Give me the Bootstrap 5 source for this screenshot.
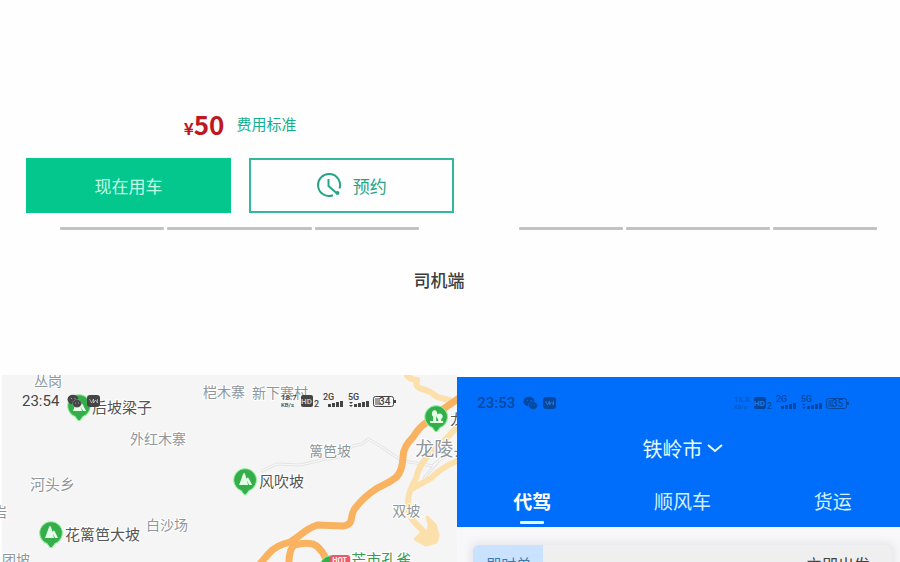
<!DOCTYPE html>
<html lang="zh-CN">
<head>
<meta charset="utf-8">
<meta name="viewport" content="width=device-width, initial-scale=1">
<title>司机端</title>
<link href="https://cdn.jsdelivr.net/npm/bootstrap@5.3.0/dist/css/bootstrap.min.css" rel="stylesheet">
<style>
  body { font-family: "Noto Sans CJK SC", sans-serif; background: #fefefe; color: #444; }
  .half-left { flex: 0 0 50.8%; }
  .half-right { flex: 1 1 0; min-width: 0; }
  .order-box { padding: 108px 3px 0 26px; }
  .price { color: #c01822; font-size: 26px; line-height: 32px; }
  .price small { font-size: 17px; line-height: 1; }
  .fee-link { color: #14b08e; font-size: 15px; line-height: 32px; }
  .order-btns { gap: 18px; margin-top: 18px; }
  .order-btns .btn { font-size: 17px; height: 55px; border: 2px solid #07c68e; }
  .btn-now, .btn-now:hover { background: #04c78d; color: #c2fbe6; }
  .order-btns .btn-book, .btn-book:hover { border-color: #35b898; color: #26a488; background: #fefefe; }
  .bars { gap: 3px; }
  .bars-left { padding: 14px 38px 0 60px; }
  .bars-right { padding: 0 23px 0 62px; }
  .bars span { height: 3px; background: #c2c2c2; flex: 105 1 0; border-radius: 1px; }
  .bars span.wide { flex-grow: 145; }
  .section-title { font-size: 17px; line-height: 24px; margin: 38px 22px 83px 0; font-weight: 500; color: #3c3c3c; }
  .map-pane svg.map { inset: 0; }
  .status { height: 20px; font: 500 15px/20px Roboto, sans-serif; }
  .map-pane .status { margin: 16px 0 0 22px; color: #454545; font-weight: 400; }
  .driver .status { margin-left: 20px; color: #06489f; }
  .status .apps { margin-left: 8px; }
  .status .signal { margin-left: 179px; }
  .driver .status .signal { margin-left: 176px; }
  .pin { fill: #35ad4b; stroke: #8ff09a; stroke-width: 1; }
  .place { font-size: 14px; fill: #8f9699; stroke: #fff; stroke-width: 2px; paint-order: stroke; }
  .spot { font-size: 15px; fill: #555; stroke: #fff; stroke-width: 2px; paint-order: stroke; }
  .driver { width: calc(100% + 8px); margin-top: 2px; background: #f8f8fa; }
  .driver-head { background: #006efa; padding-top: 16px; }
  .city { color: #e6fbff; font-size: 20px; line-height: 28px; margin-top: 22px; }
  .city:hover { color: #fff; }
  .kinds { margin-top: 24px; }
  .kinds .nav-link { color: #d5f1ff; font-size: 19px; line-height: 28px; padding: 0 0 12px; width: 100%; }
  .kinds .nav-link.active { color: #fff; font-weight: 700; padding: 0; }
  .kinds .nav-link.active::after { content: ""; display: block; width: 24px; height: 3px; margin: 6px auto 3px; background: #d9ffff; border-radius: 1px; }
  .order-card { margin: 18px 16px 0; background: #efefef; border-radius: 6px; box-shadow: 0 0 8px 3px #e6e6ea; height: 56px; }
  .tag { background: #c9e2ff; color: #3d7cad; font-size: 15px; line-height: 38px; padding: 0 13px; width: 70px; border-radius: 6px 0 0 0; }
  .depart { font-size: 16px; line-height: 38px; padding-right: 22px; color: #444; }
</style>
</head>
<body>
<div class="vh-100 d-flex flex-column overflow-hidden">
  <section class="d-flex align-items-end">
    <div class="half-left">
      <div class="order-box">
        <div class="d-flex justify-content-center align-items-center">
          <span class="price fw-bold me-2 pe-1"><small class="fw-bold">¥</small>50</span>
          <a href="#" class="fee-link text-decoration-none">费用标准</a>
        </div>
        <div class="order-btns d-flex">
          <button type="button" class="btn btn-now rounded-0 w-50">现在用车</button>
          <button type="button" class="btn btn-book rounded-0 w-50 d-flex justify-content-center align-items-center">
            <svg class="me-2" width="28" height="28" viewBox="0 0 28 28" fill="none" stroke="#26a488" stroke-width="2" aria-hidden="true">
              <path d="M16 23.300A11 11 0 1 1 22.500 16.500M11.500 7v7l8 7"/>
              <circle cx="20.500" cy="21" r="1" fill="#26a488"/>
            </svg>
            <span>预约</span>
          </button>
        </div>
      </div>
      <div class="bars bars-left d-flex"><span></span><span class="wide"></span><span></span></div>
    </div>
    <div class="half-right">
      <div class="bars bars-right d-flex"><span></span><span class="wide"></span><span></span></div>
    </div>
  </section>

  <h1 class="section-title text-center">司机端</h1>

  <section class="d-flex flex-grow-1 overflow-hidden">
    <div class="half-left map-pane position-relative overflow-hidden">
      <svg class="map position-absolute w-100 h-100" viewBox="0 375 457 187" preserveAspectRatio="xMinYMin slice" role="img" aria-label="地图">
        <defs>
          <path id="pin" class="pin" d="M-4 10.500A11.300 11.300 0 1 1 4 10.500L1 14.500H-1Z"/>
          <path id="hills" d="M-6 5L-2-6Q-1-8 0-6L3 5ZM1-1Q3-4 4-1L7 5H4Z" fill="#e3ffe5"/>
        </defs>
        <rect x="2" y="375" width="455" height="187" fill="#f5f5f5"/>
        <g fill="none" stroke-linejoin="round" stroke-linecap="round">
          <path stroke="#e2e3e4" stroke-width="3" d="M262 471L276 464L300 465L322 460L340 457L352 446L362 444L368 439L380 446L393 455L403 461L422 464L432 466L443 457M424 478L440 459"/>
          <path stroke="#fafafa" d="M262 471L276 464L300 465L322 460L340 457L352 446L362 444L368 439L380 446L393 455L403 461L422 464L432 466L443 457M424 478L440 459"/>
          <g stroke="#fbe0ac" stroke-width="6">
            <path d="M407 376Q411 380 417 380Q414 387 422 389Q430 391 437 397L449 400"/>
            <path d="M459 425Q445 440 432 452Q419 463 416 478Q407 494 408 503Q406 514 416 524L425 533M459 460Q440 468 431 478L413 488"/>
            <path d="M427 517L435 525L438 535L436 542L426 545L415 539L420 534L427 532L429 525Z" fill="#fbe0ac" stroke-width="3"/>
          </g>
          <g stroke="#f9b25f" stroke-width="7">
            <path d="M459 398L440 411Q434 418 427 422Q419 427 413 437Q403 447 403 456Q402 473 395 478Q390 482 385 484L377 488Q362 498 356 507Q352 511 351 520Q350 525 343 526L317 525Q308 528 300 535L290 542Q276 545 269 553L258 566"/>
            <path d="M289 567Q288 551 294 545Q304 542 313 544Q320 547 325 557L330 567"/>
          </g>
        </g>
        <g class="place">
          <text x="34" y="386">丛岗</text>
          <text x="203" y="397">桤木寨</text>
          <text x="252" y="398">新下寨村</text>
          <text x="130" y="444">外红木寨</text>
          <text x="309" y="456">篱笆坡</text>
          <text x="30" y="490" style="font-size:15px">河头乡</text>
          <text x="146" y="530">白沙场</text>
          <text x="392" y="516">双坡</text>
          <text x="-7" y="517">岩</text>
          <text x="2" y="565">团坡</text>
        </g>
        <text class="place" x="415" y="456" style="font-size:19px">龙陵县</text>
        <use href="#pin" x="79" y="406"/><use href="#hills" x="79" y="406"/>
        <use href="#pin" x="51" y="533"/><use href="#hills" x="51" y="533"/>
        <use href="#pin" x="245" y="480"/><use href="#hills" x="245" y="480"/>
        <use href="#pin" x="436" y="417"/>
        <path d="M434 410a3.500 4 0 0 1 2 7v4h2v-2a3 3 0 1 1 3 0v2h2v2h-13v-2h3v-4a3.500 4 0 0 1 1-7Z" fill="#e3ffe5"/>
        <use href="#pin" x="331" y="567"/>
        <rect x="330" y="555" width="20" height="10" rx="3" fill="#ee5968"/>
        <text x="332" y="563" font-size="7" font-weight="700" fill="#fff">HOT</text>
        <g class="spot">
          <text x="92" y="413">后坡梁子</text>
          <text x="259" y="487">风吹坡</text>
          <text x="65" y="540">花篱笆大坡</text>
          <text x="450" y="425">龙山</text>
          <text x="351" y="565" style="fill:#3d9a50">芒市孔雀</text>
        </g>
      </svg>
      <div class="status position-relative d-flex align-items-center">
        <span>23:54</span>
        <svg class="apps flex-shrink-0" width="34" height="16" viewBox="0 0 34 16" aria-hidden="true">
          <ellipse cx="6" cy="6.500" rx="5.500" ry="4.800" fill="currentColor"/>
          <ellipse cx="10" cy="10.500" rx="4.500" ry="4" fill="currentColor" stroke="#fff" stroke-opacity=".35" stroke-width=".6"/>
          <path d="M4 5.500h1M7.500 5.500h1M8 10h1M11 10h1" stroke="#fff" stroke-opacity=".5"/>
          <rect x="20" y="2" width="13" height="12" rx="3" fill="currentColor"/>
          <path d="M22.500 6l2 4l2-4v4l2-3l2 3V6" fill="none" stroke="#fff" stroke-opacity=".5"/>
        </svg>
        <svg class="signal flex-shrink-0" width="118" height="18" viewBox="0 0 118 18" aria-hidden="true">
          <g fill="currentColor" font-family="Roboto, sans-serif" font-weight="500">
            <text x="1" y="8" font-size="8">18.7</text>
            <text x="1" y="15" font-size="6">KB/s</text>
            <rect x="21" y="3" width="12" height="12" rx="2"/>
            <text x="21" y="12" font-size="8" font-weight="700" fill="#fff" fill-opacity=".7">HD</text>
            <text x="34" y="15" font-size="9">2</text>
            <text x="43" y="8" font-size="9">2G</text>
            <path d="M48 12h3v3h-3zM52 11h3v4h-3zM56 10h3v5h-3zM60 9h3v6h-3z"/>
            <text x="68" y="8" font-size="9">5G</text>
            <path d="M69 10h4l-2 2zM69 13h4l-2 2zM74 12h3v3h-3zM78 11h3v4h-3zM82 10h3v5h-3zM86 9h3v6h-3z"/>
            <rect x="93.500" y="4.500" width="20" height="10" rx="2" fill="none" stroke="currentColor"/>
            <path d="M95 6h5v7h-5z" fill-opacity=".5"/><path d="M114 8h2v3h-2z"/>
            <text x="99" y="13" font-size="10">34</text>
          </g>
        </svg>
      </div>
    </div>

    <div class="half-right">
      <div class="driver h-100">
        <header class="driver-head">
          <div class="status d-flex align-items-center">
            <span>23:53</span>
            <svg class="apps flex-shrink-0" width="34" height="16" viewBox="0 0 34 16" aria-hidden="true">
              <ellipse cx="6" cy="6.500" rx="5.500" ry="4.800" fill="currentColor"/>
              <ellipse cx="10" cy="10.500" rx="4.500" ry="4" fill="currentColor" stroke="#006efa" stroke-width=".6"/>
              <path d="M4 5.500h1M7.500 5.500h1M8 10h1M11 10h1" stroke="#006efa"/>
              <rect x="20" y="2" width="13" height="12" rx="3" fill="currentColor"/>
              <path d="M22.500 6l2 4l2-4v4l2-3l2 3V6" fill="none" stroke="#2a74c8"/>
            </svg>
            <svg class="signal flex-shrink-0" width="118" height="18" viewBox="0 0 118 18" aria-hidden="true">
              <g fill="currentColor" font-family="Roboto, sans-serif" font-weight="500">
                <text x="1" y="8" font-size="8" fill-opacity=".6">18.8</text>
                <text x="1" y="15" font-size="6" fill-opacity=".6">KB/s</text>
                <rect x="21" y="3" width="12" height="12" rx="2"/>
                <text x="21" y="12" font-size="8" font-weight="700" fill="#1b7bea">HD</text>
                <text x="34" y="15" font-size="9">2</text>
                <text x="43" y="8" font-size="9">2G</text>
                <path d="M48 12h3v3h-3zM52 11h3v4h-3zM56 10h3v5h-3zM60 9h3v6h-3z"/>
                <text x="68" y="8" font-size="9">5G</text>
                <path d="M69 10h4l-2 2zM69 13h4l-2 2zM74 12h3v3h-3zM78 11h3v4h-3zM82 10h3v5h-3zM86 9h3v6h-3z"/>
                <rect x="93.500" y="4.500" width="20" height="10" rx="2" fill="none" stroke="currentColor"/>
                <path d="M95 6h5v7h-5z" fill-opacity=".5"/><path d="M114 8h2v3h-2z"/>
                <text x="99" y="13" font-size="10">35</text>
              </g>
            </svg>
          </div>
          <div class="d-flex justify-content-center">
            <button type="button" class="btn city border-0 p-0 d-flex align-items-center">铁岭市
              <svg class="ms-1" width="16" height="10" viewBox="0 0 16 10" fill="none" stroke="currentColor" stroke-width="2" aria-hidden="true"><path d="M1 1l7 6l7-6"/></svg>
            </button>
          </div>
          <nav class="kinds nav nav-fill flex-nowrap">
            <a class="nav-link active" href="#">代驾</a>
            <a class="nav-link" href="#">顺风车</a>
            <a class="nav-link" href="#">货运</a>
          </nav>
        </header>
        <div class="order-card d-flex justify-content-between">
          <span class="tag text-nowrap">即时单</span>
          <span class="depart">立即出发</span>
        </div>
      </div>
    </div>
  </section>
</div>
<script src="https://cdn.jsdelivr.net/npm/bootstrap@5.3.0/dist/js/bootstrap.bundle.min.js"></script>
</body>
</html>
